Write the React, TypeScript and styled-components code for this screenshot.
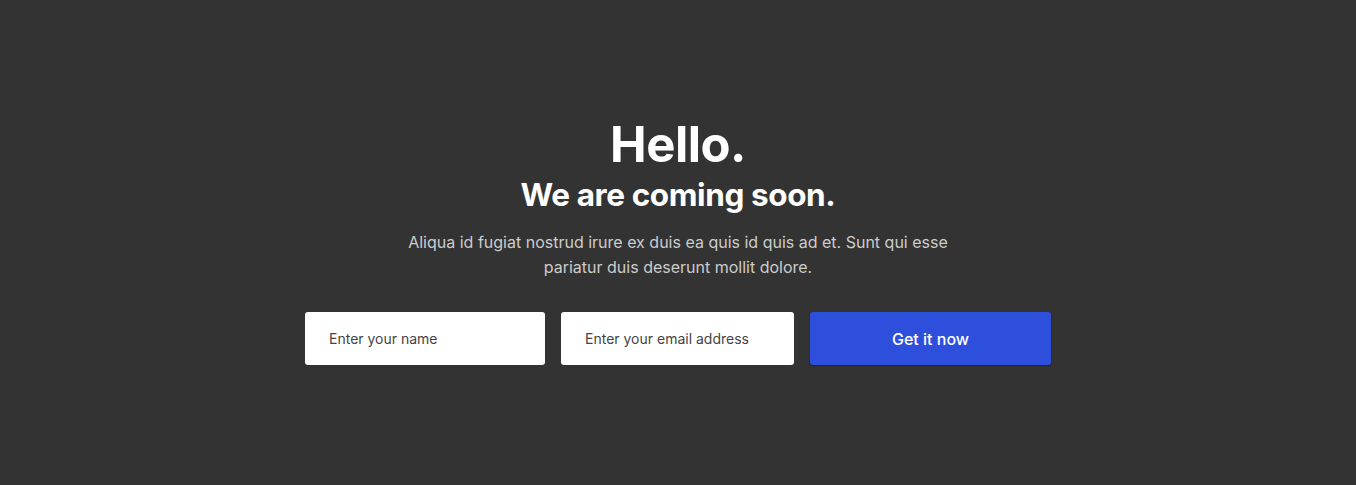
import * as React from 'react'
import styled, { createGlobalStyle } from 'styled-components'

const GlobalStyle = createGlobalStyle`
	html, body {
		margin: 0;
		padding: 0;
		background: #333333;
	}
	body {
		font-family: Inter, "Noto Sans", sans-serif;
		-webkit-font-smoothing: antialiased;
	}
	* {
		box-sizing: border-box;
	}
`

export default function App() {
	return (
		<>
			<GlobalStyle />
			<Page>
				<Hero>
					<Title>Hello.</Title>
					<Subtitle>We are coming soon.</Subtitle>
					<Lead>
						Aliqua id fugiat nostrud irure ex duis ea quis id quis ad et. Sunt qui esse
						pariatur duis deserunt mollit dolore.
					</Lead>
					<SignupForm onSubmit={(e) => e.preventDefault()}>
						<Field width={240} placeholder="Enter your name" />
						<Field width={233} type="email" placeholder="Enter your email address" />
						<SubmitButton type="submit">Get it now</SubmitButton>
					</SignupForm>
				</Hero>
			</Page>
		</>
	)
}

const Page = styled.div`
	height: 485px;
	display: flex;
	justify-content: center;
	padding-top: 115px;
`

const Hero = styled.div`
	display: flex;
	flex-direction: column;
	align-items: center;
	text-align: center;
`

const Title = styled.h1`
	margin: 0;
	font-size: 49px;
	line-height: 60px;
	font-weight: 700;
	color: #ffffff;
	letter-spacing: -0.5px;
`

const Subtitle = styled.h2`
	margin: 0;
	font-size: 31.5px;
	line-height: 40px;
	font-weight: 700;
	color: #ffffff;
	letter-spacing: -0.4px;
`

const Lead = styled.p`
	margin: 15px 0 0;
	width: 580px;
	font-size: 16px;
	line-height: 25px;
	color: #cccccc;
`

const SignupForm = styled.form`
	display: flex;
	gap: 16px;
	margin-top: 32px;
`

const Field = styled.input<{ width: number }>`
	width: ${(p) => p.width}px;
	height: 53px;
	padding: 0 24px;
	border: none;
	border-radius: 3px;
	background: #ffffff;
	font-family: Inter, "Noto Sans", sans-serif;
	font-size: 14px;
	color: #333;
	outline: none;

	&::placeholder {
		color: #444444;
		opacity: 1;
	}
`

const SubmitButton = styled.button`
	width: 241px;
	height: 53px;
	border: none;
	border-radius: 3px;
	background: #2d4fdb;
	color: #ffffff;
	font-family: Inter, "Noto Sans", sans-serif;
	font-size: 16px;
	font-weight: 500;
	cursor: pointer;
	box-shadow: 0 1px 2px rgba(0, 0, 0, 0.3);
`
